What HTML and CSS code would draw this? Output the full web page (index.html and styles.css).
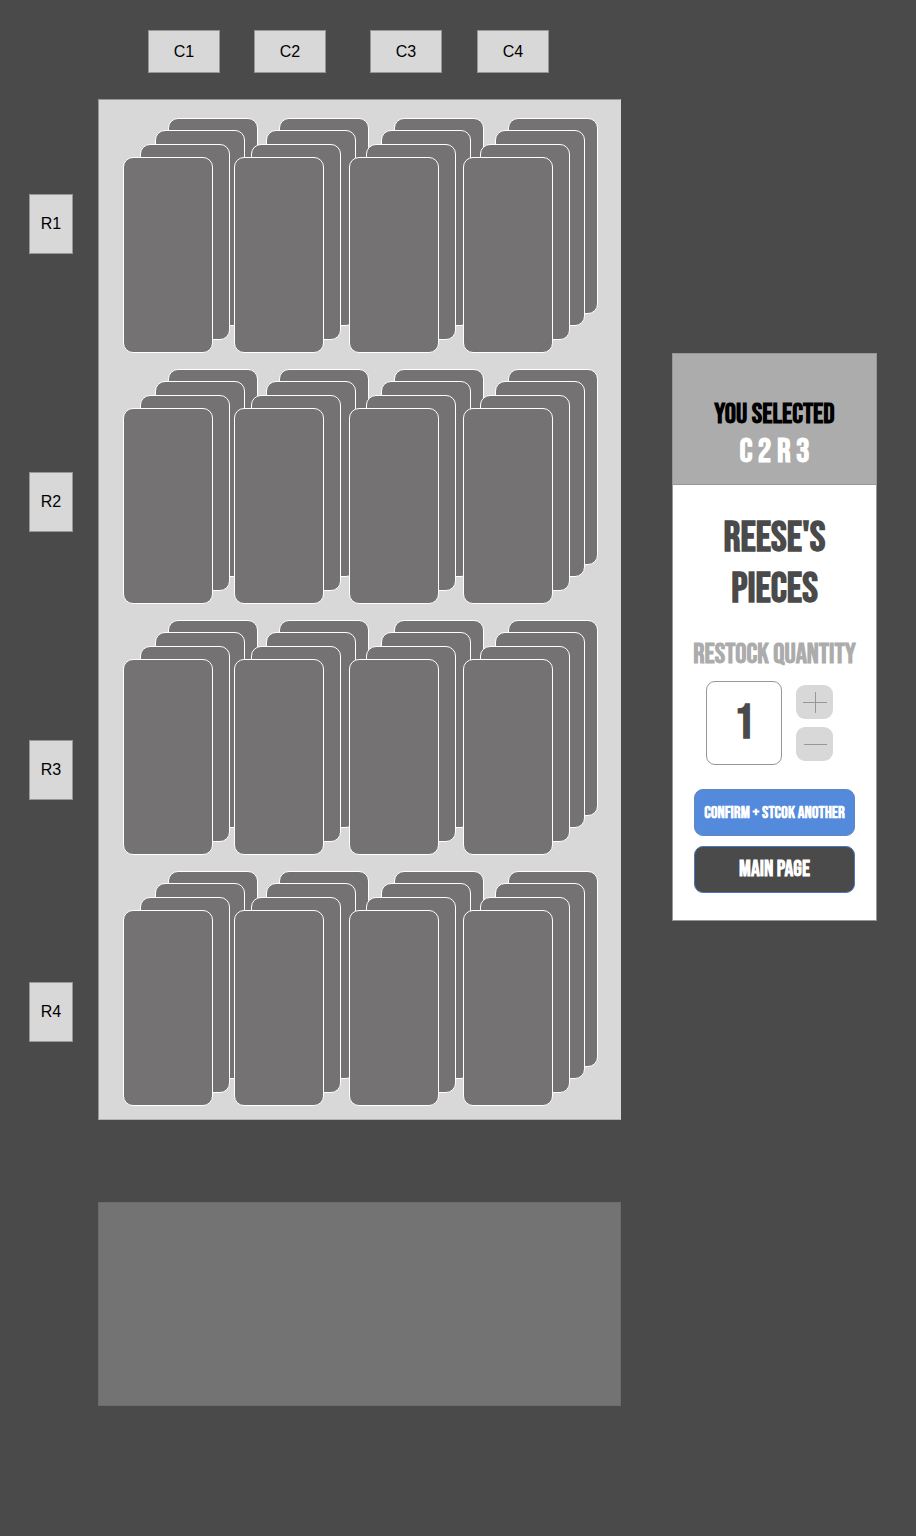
FILE: index.html
```html
<!DOCTYPE html>
<html lang="en">
<head>
<meta charset="utf-8">
<meta name="viewport" content="width=device-width, initial-scale=1">
<title>Restock</title>
<link rel="stylesheet" href="styles.css">
</head>
<body>
<main class="layout">
  <nav class="column-keys" aria-label="Columns">
    <button class="key" type="button">C1</button>
    <button class="key" type="button">C2</button>
    <button class="key" type="button">C3</button>
    <button class="key" type="button">C4</button>
  </nav>
  <nav class="row-keys" aria-label="Rows">
    <button class="key" type="button">R1</button>
    <button class="key" type="button">R2</button>
    <button class="key" type="button">R3</button>
    <button class="key" type="button">R4</button>
  </nav>
  <section class="machine" aria-label="Machine slots">
    <div class="shelf">
      <div class="stack"><i class="item"></i><i class="item"></i><i class="item"></i><i class="item"></i></div>
      <div class="stack"><i class="item"></i><i class="item"></i><i class="item"></i><i class="item"></i></div>
      <div class="stack"><i class="item"></i><i class="item"></i><i class="item"></i><i class="item"></i></div>
      <div class="stack"><i class="item"></i><i class="item"></i><i class="item"></i><i class="item"></i></div>
    </div>
    <div class="shelf">
      <div class="stack"><i class="item"></i><i class="item"></i><i class="item"></i><i class="item"></i></div>
      <div class="stack"><i class="item"></i><i class="item"></i><i class="item"></i><i class="item"></i></div>
      <div class="stack"><i class="item"></i><i class="item"></i><i class="item"></i><i class="item"></i></div>
      <div class="stack"><i class="item"></i><i class="item"></i><i class="item"></i><i class="item"></i></div>
    </div>
    <div class="shelf">
      <div class="stack"><i class="item"></i><i class="item"></i><i class="item"></i><i class="item"></i></div>
      <div class="stack"><i class="item"></i><i class="item"></i><i class="item"></i><i class="item"></i></div>
      <div class="stack"><i class="item"></i><i class="item"></i><i class="item"></i><i class="item"></i></div>
      <div class="stack"><i class="item"></i><i class="item"></i><i class="item"></i><i class="item"></i></div>
    </div>
    <div class="shelf">
      <div class="stack"><i class="item"></i><i class="item"></i><i class="item"></i><i class="item"></i></div>
      <div class="stack"><i class="item"></i><i class="item"></i><i class="item"></i><i class="item"></i></div>
      <div class="stack"><i class="item"></i><i class="item"></i><i class="item"></i><i class="item"></i></div>
      <div class="stack"><i class="item"></i><i class="item"></i><i class="item"></i><i class="item"></i></div>
    </div>
  </section>
  <form class="panel">
    <header class="panel-head">
      <p class="panel-title">YOU SELECTED</p>
      <p class="panel-slot">C 2 R 3</p>
    </header>
    <div class="panel-body">
      <h1 class="product">REESE'S<br>PIECES</h1>
      <label class="quantity-label" for="quantity">RESTOCK QUANTITY</label>
      <div class="quantity">
        <input class="quantity-input" id="quantity" type="text" inputmode="numeric" value="1">
        <div class="steppers">
          <button class="stepper" type="button" aria-label="Increase">
            <svg width="24" height="22" viewBox="0 0 24 22"><path d="M0 11.5h24M12.5 1v21" stroke="#979797" fill="none"/></svg>
          </button>
          <button class="stepper" type="button" aria-label="Decrease">
            <svg width="24" height="22" viewBox="0 0 24 22"><path d="M1 11.5h23" stroke="#979797" fill="none"/></svg>
          </button>
        </div>
      </div>
      <div class="actions">
        <button class="action action-confirm" type="submit">CONFIRM + STCOK ANOTHER</button>
        <button class="action action-main" type="button">MAIN PAGE</button>
      </div>
    </div>
  </form>
  <div class="tray"></div>
</main>
</body>
</html>
```
FILE: styles.css
```css
* {
  box-sizing: border-box;
}

body {
  margin: 0;
  background: #4a4a4a;
  color: #000;
  font-family: "Liberation Sans", Arial, sans-serif;
}

button,
input {
  margin: 0;
  padding: 0;
  font: inherit;
}

.layout {
  display: grid;
  grid-template-columns: 44px minmax(0, 1fr) 205px;
  column-gap: 25px;
  padding: 30px 39px 130px 29px;
}

.column-keys {
  grid-column: 2;
  display: grid;
  grid-template-columns: 106fr 116fr 107fr 72px;
  padding: 0 72px 0 50px;
  margin: 0 26px 26px 0;
}

.key {
  width: 72px;
  height: 43px;
  border: 1px solid #979797;
  background: #d8d8d8;
  color: #000;
  font-size: 16px;
}

.row-keys {
  grid-column: 1;
  grid-row: 2;
  display: grid;
  grid-template-rows: 278fr 268fr 242fr 60px;
  padding: 95px 0 78px;
}

.row-keys .key {
  width: 44px;
  height: 60px;
}

.machine {
  grid-column: 2;
  grid-row: 2;
  display: grid;
  gap: 16px;
  margin-right: 26px;
  padding: 18px 22px 13px 24px;
  border: 1px solid #979797;
  border-right-color: #d8d8d8;
  border-bottom-color: #b4b4b4;
  background: #d8d8d8;
}

.shelf {
  display: grid;
  grid-template-columns: minmax(0, 111fr) minmax(0, 115fr) minmax(0, 114fr) 135px;
}

.stack {
  display: grid;
  justify-content: start;
}

.item {
  grid-area: 1 / 1;
  width: 90px;
  height: 196px;
  border: 1px solid #fff;
  border-radius: 10px;
  background: #747273;
}

.item:nth-child(1) {
  margin: 0 0 39px 45px;
}

.item:nth-child(2) {
  margin: 12px 0 27px 32px;
}

.item:nth-child(3) {
  margin: 26px 0 13px 17px;
}

.item:nth-child(4) {
  margin: 39px 0 0;
}

.tray {
  grid-column: 2;
  height: 204px;
  margin: 82px 26px 0 0;
  border: 1px solid #6c6c6c;
  background: #737373;
}

.panel {
  grid-column: 3;
  grid-row: 2;
  align-self: start;
  margin-top: 254px;
  border: 1px solid #979797;
  background: #fff;
  font-family: "Bebas Neue", "Roboto Condensed", "Open Sans Condensed", Roboto, sans-serif;
  font-weight: bold;
  text-align: center;
  white-space: nowrap;
}

.panel-head {
  padding: 42px 0 14px;
  border-bottom: 1px solid #979797;
  background: #acacac;
}

.panel-title,
.panel-slot {
  margin: 0;
  font-size: 28px;
  line-height: 37px;
}

.panel-slot {
  color: #fff;
  font-size: 34px;
}

.panel-body {
  padding: 28px 21px 27px;
}

.product {
  margin: 0 0 28px;
  color: #4a4a4a;
  font-size: 42px;
  line-height: 51px;
}

.quantity-label {
  display: flex;
  justify-content: center;
  margin-bottom: 14px;
  color: #acacac;
  font-size: 28px;
  line-height: 24px;
}

.quantity {
  display: flex;
  gap: 14px;
  margin-bottom: 24px;
  padding-left: 12px;
}

.quantity-input {
  width: 76px;
  height: 84px;
  border: 1px solid #979797;
  border-radius: 9px;
  background: #fff;
  color: #4a4a4a;
  font-size: 48px;
  text-align: center;
}

.steppers {
  display: grid;
  align-content: center;
  gap: 8px;
}

.stepper {
  display: grid;
  place-items: center;
  width: 37px;
  height: 34px;
  border: 0;
  border-radius: 9px;
  background: #d8d8d8;
}

.actions {
  display: grid;
  gap: 10px;
}

.action {
  height: 47px;
  border: 1px solid #4a78bd;
  border-radius: 9px;
  background: #4a4a4a;
  color: #fff;
  font-size: 22px;
}

.action-confirm {
  border-color: #6486b8;
  background: #538adc;
  font-size: 17px;
}
```
